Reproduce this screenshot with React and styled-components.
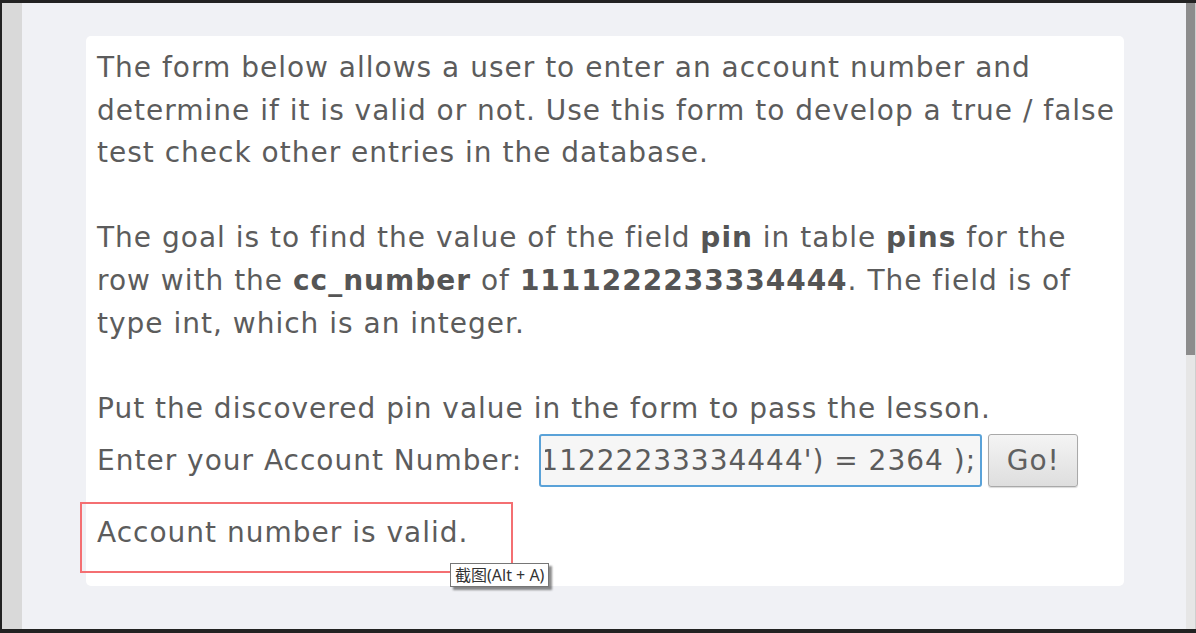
import React, { useLayoutEffect, useRef } from 'react';
import styled, { createGlobalStyle } from 'styled-components';

const GlobalStyle = createGlobalStyle`
  html, body {
    margin: 0;
    padding: 0;
    overflow: hidden;
  }
`;

const Frame = styled.div`
  display: flex;
  box-sizing: border-box;
  width: 1196px;
  height: 633px;
  background: #f0f1f5;
  border-top: 3px solid #222;
  border-bottom: 4px solid #222;
  border-left: 2px solid #222;
  font-family: 'DejaVu Sans', Verdana, sans-serif;
`;

const SideStrip = styled.div`
  width: 20px;
  background: #d9d9d9;
`;

const Main = styled.main`
  flex: 1;
  padding: 33px 0 0 64px;
  position: relative;
`;

const Scrollbar = styled.div`
  width: 9px;
  display: flex;
  flex-direction: column;
  background: #e6e6e6;
  border-right: 1px solid #cfcfcf;
`;

const Thumb = styled.div`
  height: 352px;
  background: #8c8c8c;
`;

const Card = styled.section`
  width: 1038px;
  box-sizing: border-box;
  background: #fff;
  border-radius: 5px;
  padding: 11px 0 31px 11px;
  color: #5c5c5c;
  font-size: 28px;
  letter-spacing: 1px;
  line-height: 42.6px;
`;

const Para = styled.p`
  margin: 0 0 ${(p) => (p.$gap ? '42.6px' : '0')};
  b {
    font-weight: bold;
    color: #555;
  }
`;

const FormRow = styled.div`
  display: flex;
  align-items: center;
  margin-top: 4px;
  height: 53px;
`;

const Label = styled.span`
  margin-right: 17px;
`;

const AccountInput = styled.input`
  box-sizing: border-box;
  width: 443px;
  height: 53px;
  padding: 0 4px;
  border: 2px solid #5aa2d8;
  border-radius: 3px;
  background: #f6f6f6;
  color: #5c5c5c;
  font-family: inherit;
  font-size: 28px;
  letter-spacing: 1px;
  outline: none;
`;

const GoButton = styled.button`
  box-sizing: border-box;
  width: 90px;
  height: 53px;
  margin-left: 6px;
  border: 1px solid #a9a9a9;
  border-radius: 3px;
  background: linear-gradient(#f4f4f4, #dedede);
  box-shadow: 0 1px 1px rgba(0, 0, 0, 0.15);
  color: #606060;
  font-family: inherit;
  font-size: 28px;
  letter-spacing: 1px;
`;

const Result = styled.div`
  margin-top: 25px;
`;

const Annotation = styled.div`
  position: absolute;
  left: 58px;
  top: 499px;
  width: 433px;
  height: 71px;
  border: 2px solid #f46f72;
  box-sizing: border-box;
  pointer-events: none;
`;

const Tooltip = styled.div`
  position: absolute;
  left: 428px;
  top: 560px;
  padding: 2px 4px;
  background: #fff;
  border: 1px solid #767676;
  box-shadow: 3px 3px 2px rgba(0, 0, 0, 0.45);
  color: #333;
  font-family: 'Noto Sans', 'Noto Sans CJK SC', sans-serif;
  font-size: 16px;
  line-height: 18px;
  white-space: nowrap;
`;

export default function App() {
  const inputRef = useRef(null);
  const value = "101 AND ((SELECT pin FROM pins WHERE cc_number='1111222233334444') = 2364 );";

  useLayoutEffect(() => {
    const el = inputRef.current;
    if (el) el.scrollLeft = el.scrollWidth;
  }, []);

  return (
    <>
      <GlobalStyle />
      <Frame>
        <SideStrip />
        <Main>
          <Card>
            <Para $gap>
              The form below allows a user to enter an account number and determine if it is
              valid or not. Use this form to develop a true / false test check other entries in
              the database.
            </Para>
            <Para $gap>
              The goal is to find the value of the field <b>pin</b> in table <b>pins</b> for the
              row with the <b>cc_number</b> of <b>1111222233334444</b>. The field is of type int,
              which is an integer.
            </Para>
            <Para>Put the discovered pin value in the form to pass the lesson.</Para>
            <FormRow>
              <Label>Enter your Account Number:</Label>
              <AccountInput ref={inputRef} defaultValue={value} />
              <GoButton>Go!</GoButton>
            </FormRow>
            <Result>Account number is valid.</Result>
          </Card>
          <Annotation />
          <Tooltip>截图(Alt + A)</Tooltip>
        </Main>
        <Scrollbar>
          <Thumb />
        </Scrollbar>
      </Frame>
    </>
  );
}
